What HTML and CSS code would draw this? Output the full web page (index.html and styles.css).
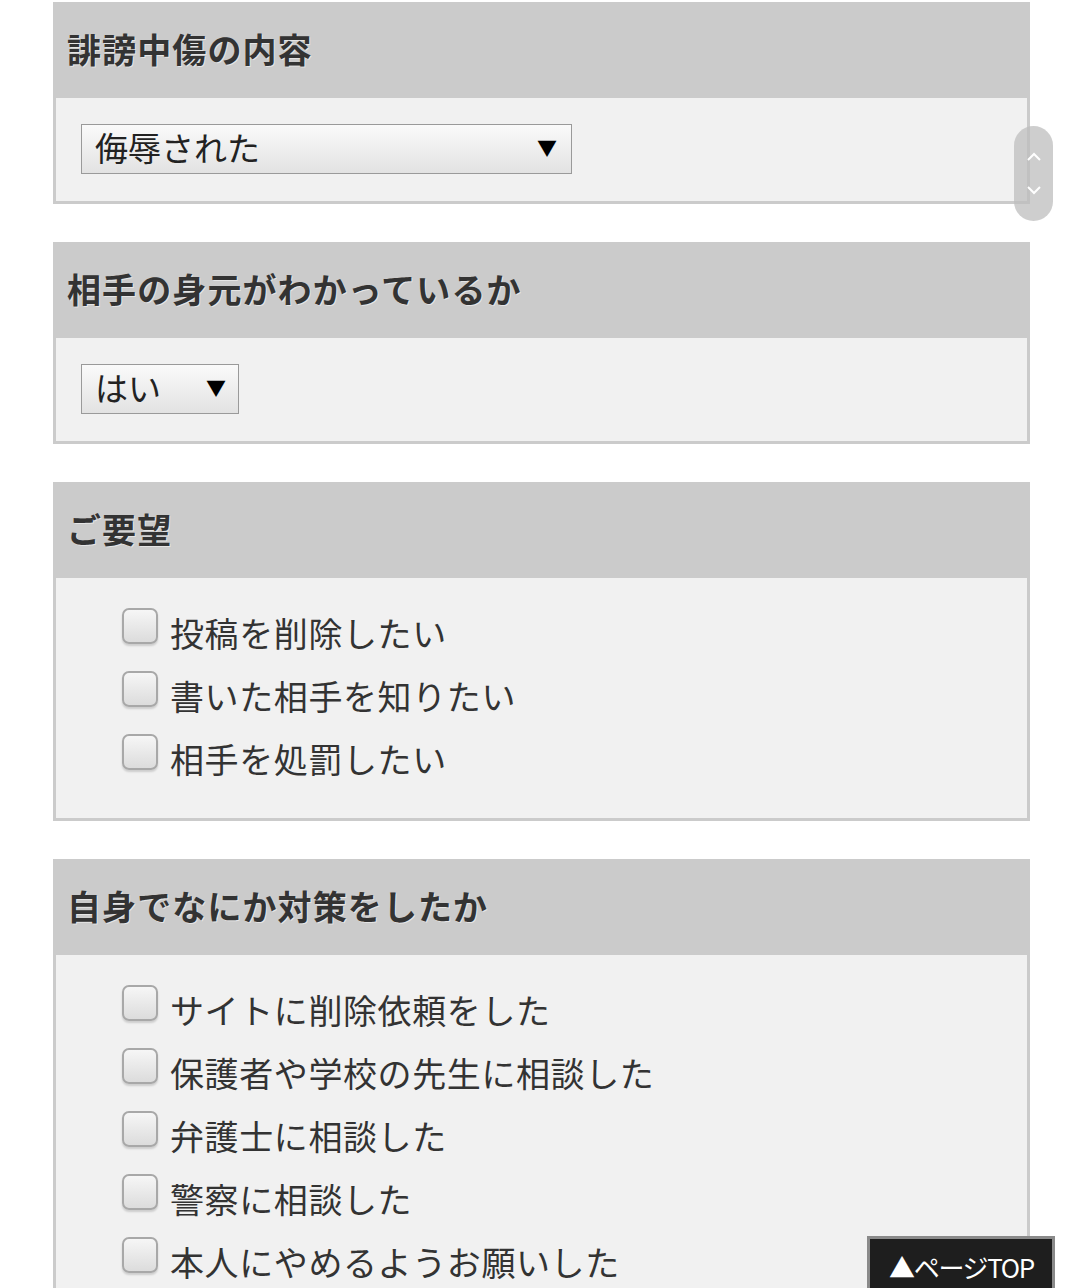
FILE: index.html
```html
<!DOCTYPE html>
<html lang="ja">
<head>
<meta charset="utf-8">
<title>フォーム</title>
<link rel="stylesheet" href="styles.css">
</head>
<body>
<main class="page">
  <section class="box">
    <h2 class="box-head">誹謗中傷の内容</h2>
    <div class="box-body">
      <div class="select wide"><span>侮辱された</span><span class="arrow">▼</span></div>
    </div>
  </section>
  <section class="box">
    <h2 class="box-head">相手の身元がわかっているか</h2>
    <div class="box-body">
      <div class="select narrow"><span>はい</span><span class="arrow">▼</span></div>
    </div>
  </section>
  <section class="box">
    <h2 class="box-head">ご要望</h2>
    <div class="box-body checks">
      <label class="check"><span class="cb"></span>投稿を削除したい</label>
      <label class="check"><span class="cb"></span>書いた相手を知りたい</label>
      <label class="check"><span class="cb"></span>相手を処罰したい</label>
    </div>
  </section>
  <section class="box">
    <h2 class="box-head">自身でなにか対策をしたか</h2>
    <div class="box-body checks">
      <label class="check"><span class="cb"></span>サイトに削除依頼をした</label>
      <label class="check"><span class="cb"></span>保護者や学校の先生に相談した</label>
      <label class="check"><span class="cb"></span>弁護士に相談した</label>
      <label class="check"><span class="cb"></span>警察に相談した</label>
      <label class="check"><span class="cb"></span>本人にやめるようお願いした</label>
    </div>
  </section>
</main>
<div class="scroller">
  <svg width="39" height="95" viewBox="0 0 39 95"><path d="M14 34 L20 28 L26 34" fill="none" stroke="#fff" stroke-width="2"/><path d="M14 61 L20 67 L26 61" fill="none" stroke="#fff" stroke-width="2"/></svg>
</div>
<a class="pagetop" href="#">▲ページTOP</a>
</body>
</html>
```
FILE: styles.css
```css
html, body {
  margin: 0;
  padding: 0;
  background: #fff;
}
body {
  font-family: "Noto Sans CJK JP", "Noto Sans", sans-serif;
  color: #333;
  height: 1288px;
  overflow: hidden;
}
.page {
  padding: 2px 50px 0 53px;
  display: flex;
  flex-direction: column;
  gap: 38px;
}
.box {
  border: 3px solid #cbcbcb;
  background: #f1f1f1;
}
.box-head {
  margin: 0;
  background: #cbcbcb;
  height: 93px;
  box-sizing: border-box;
  display: flex;
  align-items: center;
  padding: 0 0 6px 11px;
  font-size: 34px;
  font-weight: 700;
  color: #333;
  text-shadow: 1px 1px 0 rgba(255,255,255,0.5);
  letter-spacing: 1.1px;
}
.box-body {
  padding: 26px 25px 27px 25px;
}
.select {
  box-sizing: border-box;
  height: 50px;
  border: 1px solid #9a9a9a;
  background: linear-gradient(#fafafa, #e2e2e2);
  display: flex;
  align-items: center;
  justify-content: space-between;
  padding: 0 14px 4px 13px;
  font-size: 33px;
  color: #222;
}
.select .arrow {
  font-size: 20px;
  color: #000;
}
.wide { width: 491px; }
.narrow { width: 158px; padding-right: 12px; }
.checks {
  padding: 23px 25px 28px 66px;
  display: flex;
  flex-direction: column;
}
.check {
  display: flex;
  align-items: center;
  height: 63px;
  font-size: 34px;
  color: #333;
  letter-spacing: 0.6px;
}
.cb {
  box-sizing: border-box;
  width: 36px;
  height: 36px;
  margin-right: 12px;
  margin-top: -14px;
  border: 2px solid #a8a8a8;
  border-radius: 7px;
  background: linear-gradient(#f6f6f6, #dcdcdc);
  box-shadow: 0 2px 2px rgba(0,0,0,0.15);
  flex: none;
}
.scroller {
  position: fixed;
  left: 1014px;
  top: 126px;
  width: 39px;
  height: 95px;
  border-radius: 20px;
  background: rgba(190,190,190,0.75);
}
.scroller svg { display: block; }
.pagetop {
  position: fixed;
  left: 867px;
  top: 1236px;
  width: 188px;
  height: 70px;
  box-sizing: border-box;
  border: 3px solid #8a8a8a;
  border-bottom: none;
  background: #1e1e1e;
  color: #fff;
  text-decoration: none;
  font-size: 26px;
  padding: 9px 0 0 19px;
  font-family: "Noto Sans CJK JP", sans-serif;
  letter-spacing: -1.3px;
}
```
